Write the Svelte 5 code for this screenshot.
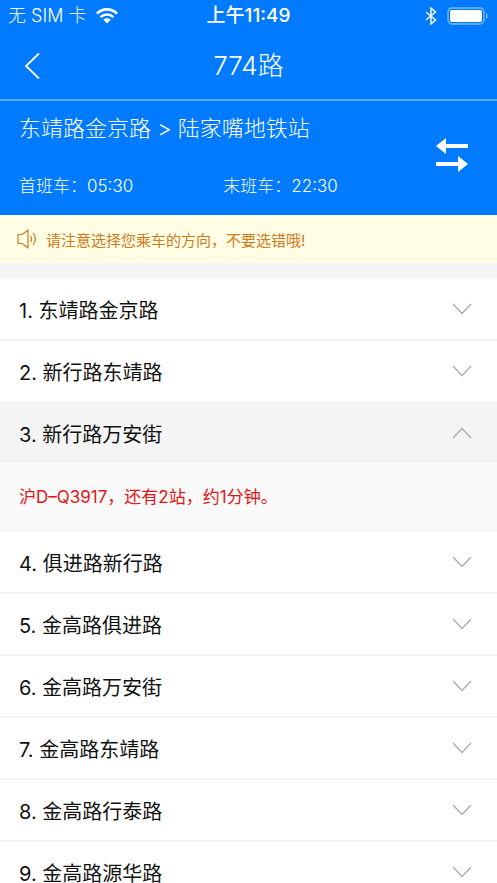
<script>
  const route = {
    name: "774路",
    from: "东靖路金京路",
    to: "陆家嘴地铁站",
    first: "05:30",
    last: "22:30",
  };

  const stops = [
    { name: "东靖路金京路" },
    { name: "新行路东靖路" },
    { name: "新行路万安街", arrival: "沪D–Q3917，还有2站，约1分钟。" },
    { name: "俱进路新行路" },
    { name: "金高路俱进路" },
    { name: "金高路万安街" },
    { name: "金高路东靖路" },
    { name: "金高路行泰路" },
    { name: "金高路源华路" },
  ];

  let openIndex = $state(2);
  let reversed = $state(false);

  function toggle(index) {
    openIndex = openIndex === index ? -1 : index;
  }
</script>

<div class="app">
  <div class="status">
    <div class="status__side">
      <span>无 SIM 卡</span>
      <svg class="status__wifi" width="22" height="16" viewBox="0 0 22 16" aria-hidden="true">
        <g fill="none" stroke="#fff" stroke-width="2.6">
          <path d="M1 5.6C6.5 0 15.5 0 21 5.6" />
          <path d="M4.6 9.2C8.2 5.6 13.8 5.6 17.4 9.2" />
        </g>
        <path d="M7.3 11.7C9.4 9.7 12.6 9.7 14.7 11.7L11 15.6Z" fill="#fff" />
      </svg>
    </div>
    <span class="status__time">上午11:49</span>
    <div class="status__side status__side--end">
      <svg width="12" height="18" viewBox="0 0 12 18" aria-hidden="true">
        <path d="M1 5L10.5 13L6 17V1L10.5 5L1 13" fill="none" stroke="#fff" stroke-width="1.4" />
      </svg>
      <svg width="42" height="18" viewBox="0 0 42 18" aria-hidden="true">
        <rect x="1" y="1" width="36" height="16" rx="4" fill="none" stroke="#7dbcff" stroke-width="1.3" />
        <rect x="3" y="3" width="32" height="12" rx="2" fill="#fff" />
        <path d="M39 6C41.4 7 41.4 11 39 12Z" fill="#7dbcff" />
      </svg>
    </div>
  </div>

  <header class="nav">
    <button class="nav__back" aria-label="返回">
      <svg width="18" height="28" viewBox="0 0 18 28" aria-hidden="true">
        <path d="M16 1.5L3 14L16 26.5" fill="none" stroke="#fff" stroke-width="1.8" />
      </svg>
    </button>
    <h1 class="nav__title">{route.name}</h1>
  </header>

  <section class="route">
    <div class="route__info">
      <h2 class="route__direction">
        {reversed ? route.to : route.from} &gt; {reversed ? route.from : route.to}
      </h2>
      <div class="route__times">
        <span>首班车：{route.first}</span>
        <span>末班车：{route.last}</span>
      </div>
    </div>
    <button class="route__swap" aria-label="切换方向" onclick={() => (reversed = !reversed)}>
      <svg width="32" height="34" viewBox="0 0 32 34" aria-hidden="true">
        <path d="M0 8L10 0V6H32V10H10V16Z" fill="#fff" />
        <path d="M32 26L22 18V24H0V28H22V34Z" fill="#fff" />
      </svg>
    </button>
  </section>

  <p class="notice">
    <svg width="20" height="20" viewBox="0 0 20 20" aria-hidden="true">
      <g fill="none" stroke="#cf7a1c" stroke-width="1.2">
        <path d="M1 5.5H5L11 1.2V18.8L5 14.5H1Z" />
        <path d="M13.4 7C14.8 8.8 14.8 11.2 13.4 13" />
        <path d="M16 4.2C19.2 7.4 19.2 12.6 16 15.8" />
      </g>
    </svg>
    <span>请注意选择您乘车的方向，不要选错哦!</span>
  </p>

  <ol class="stops">
    {#each stops as stop, i}
      <li class="stop">
        <button
          class="stop__head"
          class:stop__head--open={openIndex === i}
          aria-expanded={openIndex === i}
          onclick={() => toggle(i)}
        >
          <span>{i + 1}. {stop.name}</span>
          <svg class="stop__arrow" width="20" height="12" viewBox="0 0 20 12" aria-hidden="true">
            <path d="M1 1L10 10.5L19 1" fill="none" stroke="#aaa" stroke-width="1.3" />
          </svg>
        </button>
        {#if openIndex === i}
          <p class="stop__arrival">{stop.arrival ?? "暂无车辆信息"}</p>
        {/if}
      </li>
    {/each}
  </ol>
</div>

<style>
  :global(body) {
    margin: 0;
    background: #fff;
  }

  .app {
    color: #111;
    font-family: Inter, "Noto Sans CJK SC", sans-serif;
  }

  button {
    padding: 0;
    border: 0;
    background: none;
    color: inherit;
    font: inherit;
    cursor: pointer;
  }

  svg {
    display: block;
    flex: none;
  }

  h1,
  h2,
  p,
  ol {
    margin: 0;
    padding: 0;
    font-weight: 400;
  }

  .status {
    display: grid;
    grid-template-columns: 1fr auto 1fr;
    align-items: center;
    height: 32px;
    padding: 0 8px;
    background: #007aff;
    color: #fff;
    font-size: 18px;
    line-height: 28px;
    font-weight: 300;
  }

  .status__side {
    display: flex;
    align-items: center;
    gap: 10px;
  }

  .status__side--end {
    justify-content: flex-end;
  }

  .status__time {
    font-size: 19px;
    font-weight: 500;
  }

  .nav {
    display: grid;
    grid-template-columns: 48px 1fr 48px;
    align-items: center;
    height: 67px;
    padding: 0 8px;
    border-bottom: 2px solid #59abff;
    background: #007aff;
    color: #fff;
  }

  .nav__back {
    display: flex;
    justify-content: center;
    padding: 8px 0;
  }

  .nav__title {
    font-size: 26px;
    font-weight: 300;
    line-height: 36px;
    text-align: center;
  }

  .route {
    display: flex;
    align-items: center;
    padding: 11px 29px 17px 19px;
    background: #007aff;
    color: #fff;
  }

  .route__info {
    flex: 1;
  }

  .route__direction {
    font-size: 22px;
    font-weight: 300;
    line-height: 32px;
  }

  .route__times {
    display: grid;
    grid-template-columns: 49% 1fr;
    margin-top: 30px;
    font-size: 17px;
    font-weight: 300;
    line-height: 24px;
  }

  .notice {
    display: flex;
    align-items: center;
    gap: 9px;
    height: 48px;
    padding: 0 17px;
    background: #fffde3;
    color: #cf7a1c;
    font-size: 15px;
  }

  .stops {
    border-top: 16px solid #f3f5f6;
    list-style: none;
  }

  .stop {
    border-bottom: 2px solid #f4f4f4;
  }

  .stop__head {
    display: flex;
    align-items: center;
    justify-content: space-between;
    width: 100%;
    height: 60px;
    padding: 0 25px 0 19px;
    font-size: 20px;
    text-align: left;
  }

  .stop__head--open {
    background: #f4f4f4;
  }

  .stop__head--open .stop__arrow {
    transform: rotate(180deg);
  }

  .stop__arrival {
    padding: 20px 19px 19px;
    background: #fafafa;
    color: #e31414;
    font-size: 17px;
    line-height: 28px;
  }
</style>
